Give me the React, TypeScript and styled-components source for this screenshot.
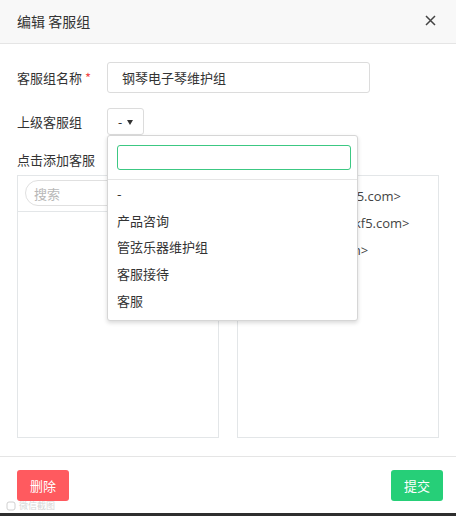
import React from "react";
import styled, { createGlobalStyle } from "styled-components";

const Global = createGlobalStyle`
  html, body { margin: 0; padding: 0; background: #fff; }
  body { font-family: "Open Sans", "Noto Sans CJK SC", sans-serif; color: #333; font-size: 13px; }
  * { box-sizing: border-box; }
`;

const Dialog = styled.div`
  width: 456px;
  height: 516px;
  display: flex;
  flex-direction: column;
  background: #fff;
  position: relative;
  overflow: hidden;
`;

const Header = styled.div`
  height: 44px;
  flex: none;
  background: #f8f8f8;
  border-bottom: 1px solid #e5e5e5;
  display: flex;
  align-items: center;
  justify-content: space-between;
  padding: 0 17px 1px 17px;
`;

const Title = styled.div`
  font-size: 14px;
  color: #333;
  font-family: "Noto Sans CJK SC", sans-serif;
`;

const Close = styled.div`
  width: 14px;
  height: 14px;
  margin-top: -2px;
  margin-right: 2px;
  display: flex;
  align-items: center;
  justify-content: center;
`;

const Body = styled.div`
  flex: 1;
  padding: 18px 17px 0 17px;
  display: flex;
  flex-direction: column;
`;

const Row = styled.div<{ $mb: number }>`
  display: flex;
  align-items: center;
  margin-bottom: ${(p) => p.$mb}px;
`;

const Label = styled.div`
  width: 90px;
  flex: none;
  font-family: "Noto Sans CJK SC", sans-serif;
  font-size: 13px;
  color: #333;
`;

const Star = styled.span`
  color: #f04848;
  margin-left: 3px;
`;

const TextInput = styled.div`
  width: 263px;
  height: 31px;
  border: 1px solid #dcdcdc;
  border-radius: 3px;
  padding: 0 14px;
  display: flex;
  align-items: center;
  font-family: "Noto Sans CJK SC", sans-serif;
  font-size: 13px;
  color: #333;
`;

const SelectWrap = styled.div`
  position: relative;
`;

const SelectBtn = styled.div`
  width: 37px;
  height: 27px;
  border: 1px solid #dcdcdc;
  border-radius: 3px;
  display: flex;
  align-items: center;
  justify-content: center;
  gap: 5px;
  font-size: 13px;
  color: #333;
`;

const Caret = styled.span`
  width: 0;
  height: 0;
  border-left: 3.5px solid transparent;
  border-right: 3.5px solid transparent;
  border-top: 5px solid #333;
  margin-top: 1px;
`;

const Dropdown = styled.div`
  position: absolute;
  top: 27px;
  left: 0;
  width: 251px;
  height: 186px;
  background: #fff;
  border: 1px solid #d6d6d6;
  border-radius: 3px;
  box-shadow: 0 2px 4px rgba(0, 0, 0, 0.15);
  z-index: 10;
  display: flex;
  flex-direction: column;
`;

const DropSearch = styled.div`
  padding: 9px 6px 9px 9px;
  border-bottom: 1px solid #e5e5e5;
`;

const SearchBox = styled.div`
  height: 25px;
  border: 1px solid #3cc883;
  border-radius: 3px;
`;

const Options = styled.div`
  display: flex;
  flex-direction: column;
`;

const Option = styled.div`
  height: 26.7px;
  padding-left: 9px;
  display: flex;
  align-items: center;
  font-family: "Noto Sans CJK SC", sans-serif;
  font-size: 13px;
  color: #333;
`;

const SectionLabel = styled.div`
  font-family: "Noto Sans CJK SC", sans-serif;
  font-size: 13px;
  color: #333;
  margin-bottom: 6px;
  line-height: 18px;
`;

const Panels = styled.div`
  display: grid;
  grid-template-columns: 202px 202px;
  gap: 18px;
`;

const Panel = styled.div`
  height: 263px;
  border: 1px solid #e3e6e8;
  display: flex;
  flex-direction: column;
`;

const PanelSearch = styled.div`
  height: 36px;
  border-bottom: 1px solid #e3e6e8;
  padding: 4px 7px;
`;

const RoundSearch = styled.div`
  height: 26px;
  width: 120px;
  border: 1px solid #e0e0e0;
  border-radius: 13px;
  padding-left: 8px;
  display: flex;
  align-items: center;
  color: #b8b8b8;
  font-family: "Noto Sans CJK SC", sans-serif;
  font-size: 13px;
`;

const MemberList = styled.div`
  padding: 6px 0 0 10px;
  display: flex;
  flex-direction: column;
`;

const Member = styled.div`
  height: 27px;
  display: flex;
  align-items: center;
  font-size: 13px;
  color: #444;
  white-space: nowrap;
  font-family: "Open Sans", "Noto Sans CJK SC", sans-serif;
`;

const Footer = styled.div`
  height: 57px;
  flex: none;
  border-top: 1px solid #e5e5e5;
  display: flex;
  justify-content: space-between;
  align-items: flex-start;
  padding: 13px 13px 0 17px;
`;

const Button = styled.div<{ $bg: string }>`
  width: 52px;
  height: 31px;
  border-radius: 3px;
  background: ${(p) => p.$bg};
  color: #fff;
  display: flex;
  align-items: center;
  justify-content: center;
  font-family: "Noto Sans CJK SC", sans-serif;
  font-size: 13px;
`;

const BottomEdge = styled.div`
  height: 3px;
  flex: none;
  background: #2e2e2e;
`;

const Watermark = styled.div`
  position: absolute;
  left: 6px;
  bottom: 4px;
  display: flex;
  align-items: center;
  gap: 3px;
  font-size: 9px;
  color: #d6d6d6;
  font-family: "Noto Sans CJK SC", sans-serif;
`;

export default function App() {
  return (
    <>
      <Global />
      <Dialog>
        <Header>
          <Title>编辑 客服组</Title>
          <Close>
            <svg width="11" height="11" viewBox="0 0 11 11">
              <path d="M1 1 L10 10 M10 1 L1 10" stroke="#444" strokeWidth="1.5" />
            </svg>
          </Close>
        </Header>
        <Body>
          <Row $mb={15}>
            <Label>
              客服组名称<Star>*</Star>
            </Label>
            <TextInput>钢琴电子琴维护组</TextInput>
          </Row>
          <Row $mb={16}>
            <Label>上级客服组</Label>
            <SelectWrap>
              <SelectBtn>
                <span>-</span>
                <Caret />
              </SelectBtn>
              <Dropdown>
                <DropSearch>
                  <SearchBox />
                </DropSearch>
                <Options>
                  <Option>-</Option>
                  <Option>产品咨询</Option>
                  <Option>管弦乐器维护组</Option>
                  <Option>客服接待</Option>
                  <Option>客服</Option>
                </Options>
              </Dropdown>
            </SelectWrap>
          </Row>
          <SectionLabel>点击添加客服</SectionLabel>
          <Panels>
            <Panel>
              <PanelSearch>
                <RoundSearch>搜索</RoundSearch>
              </PanelSearch>
            </Panel>
            <Panel>
              <MemberList>
                <Member>王小明 &lt;wxmg@kf5.com&gt;</Member>
                <Member>李晓华 &lt;lixhuab@kf5.com&gt;</Member>
                <Member>张伟 &lt;zw@kf5.com&gt;</Member>
              </MemberList>
            </Panel>
          </Panels>
        </Body>
        <Footer>
          <Button $bg="#ff5a5f">删除</Button>
          <Button $bg="#26cf78">提交</Button>
        </Footer>
        <BottomEdge />
        <Watermark>
          <svg width="10" height="10" viewBox="0 0 10 10">
            <rect x="1" y="1" width="8" height="8" rx="2" fill="none" stroke="#d0d0d0" />
          </svg>
          <span>微信截图</span>
        </Watermark>
      </Dialog>
    </>
  );
}
